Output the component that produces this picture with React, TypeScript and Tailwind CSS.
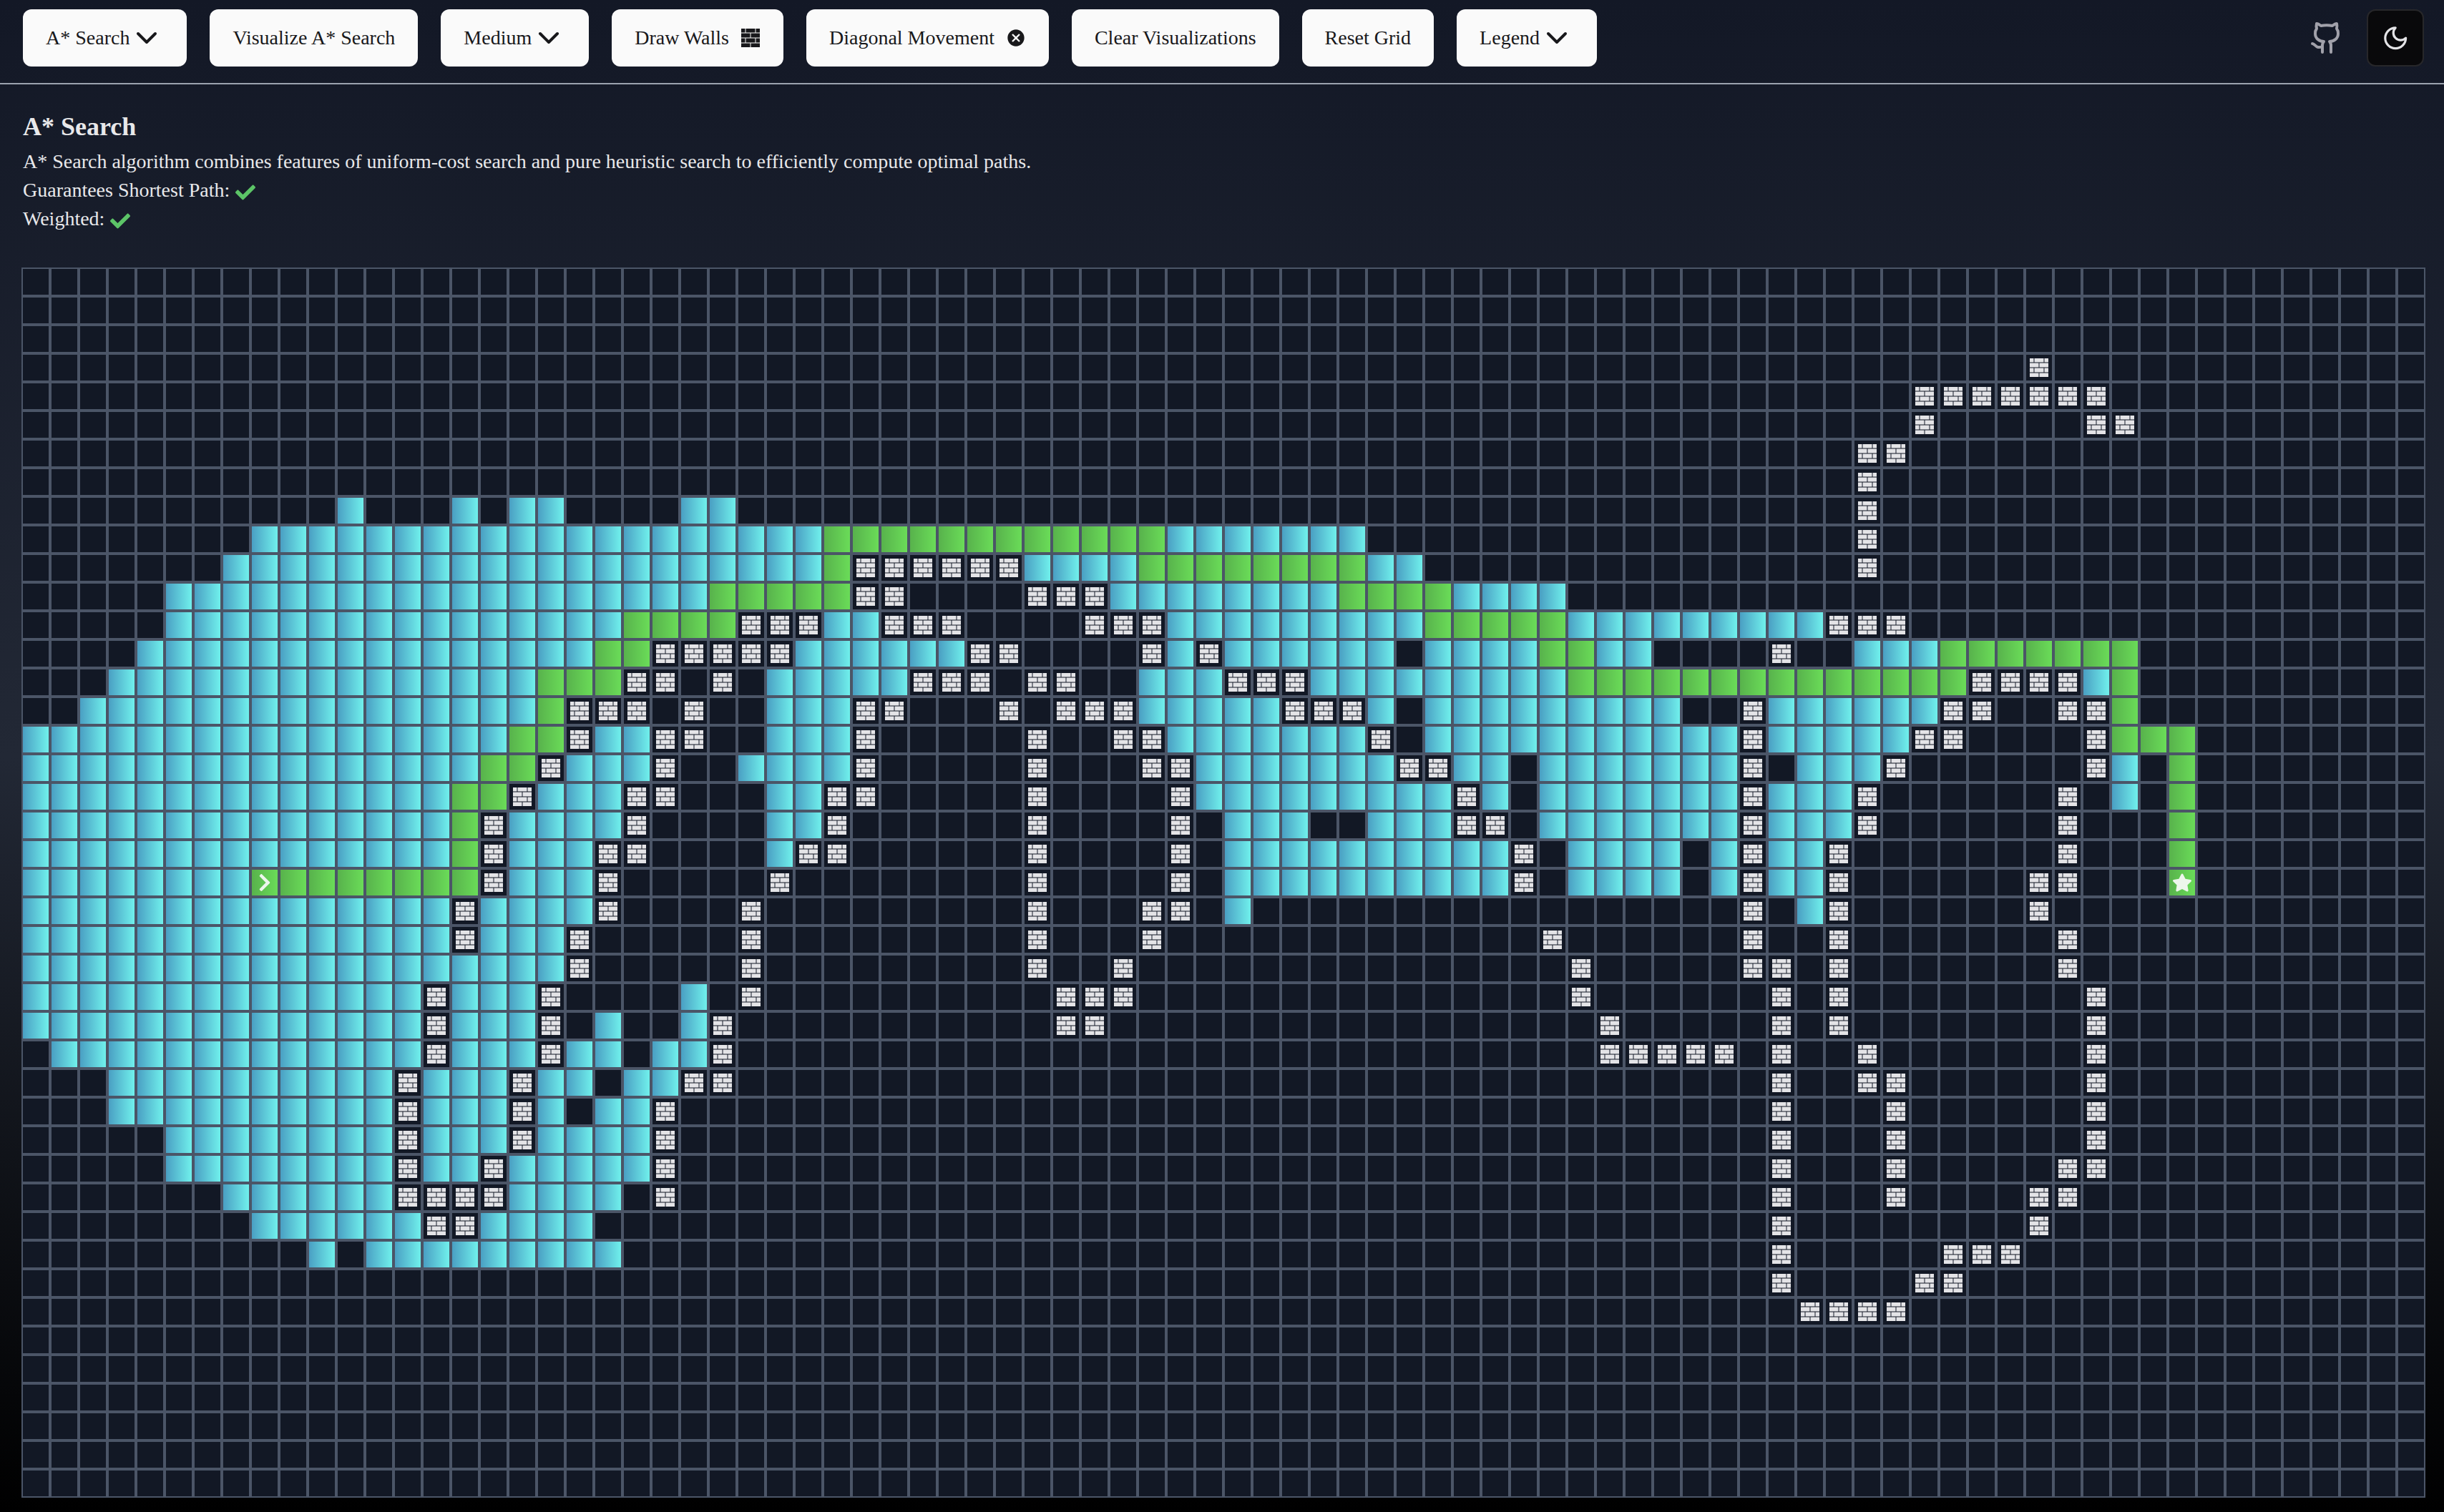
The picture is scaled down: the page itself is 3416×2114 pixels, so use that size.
import React from "react";
import { ChevronDown, Github } from "lucide-react";
import { FaCheck, FaChevronRight, FaStar } from "react-icons/fa";
import { MdCancel } from "react-icons/md";
import { GiBrickWall } from "react-icons/gi";

const ROWS = 43;
const COLS = 84;

type Kind = "v" | "p" | "w" | "s" | "e";

// v = visited, p = path, w = wall, s = start, e = end; each run is "kind from-to".
const RUNS: Record<number, string> = {
  3: "w70",
  4: "w66-72",
  5: "w66 w72-73",
  6: "w64-65",
  7: "w64",
  8: "v11 v15 v17-18 v23-24 w64",
  9: "v8-27 p28-39 v40-46 w64",
  10: "v7-27 p28 w29-34 v35-38 p39-46 v47-48 w64",
  11: "v5-23 p24-28 w29-30 w35-37 v38-45 p46-49 v50-53",
  12: "v5-20 p21-24 w25-27 v28-29 w30-32 w37-39 v40-48 p49-53 v54-62 w63-65",
  13: "v4-19 p20-21 w22-26 v27-32 w33-34 w39 v40 w41 v42-47 v49-52 p53-54 v55-56 w61 v64-66 p67-73",
  14: "v3-17 p18-20 w21-22 w24 v26-30 w31-33 w35-36 v39-41 w42-44 v45-53 p54-67 w68-71 v72 p73",
  15: "v2-17 p18 w19-21 w23 v26-28 w29-30 w34 w36-38 v39-43 w44-46 v47 v49-57 w60 v61-66 w67-68 w71-72 p73",
  16: "v0-16 p17-18 w19 v20-21 w22-23 v26-28 w29 w35 w38-39 v40-46 w47 v49-59 w60 v61-65 w66-67 w72 p73-75",
  17: "v0-15 p16-17 w18 v19-21 w22 v25-28 w29 w35 w39-40 v41-47 w48-49 v50-51 v53-59 w60 v62-64 w65 w72 v73 p75",
  18: "v0-14 p15-16 w17 v18-20 w21-22 v26-27 w28-29 w35 w40 v41-49 w50 v51 v53-59 w60 v61-63 w64 w71 v73 p75",
  19: "v0-14 p15 w16 v17-20 w21 v26-27 w28 w35 w40 v42-44 v47-49 w50-51 v53-59 w60 v61-63 w64 w71 p75",
  20: "v0-14 p15 w16 v17-19 w20-21 v26 w27-28 w35 w40 v42-51 w52 v54-57 v59 w60 v61-62 w63 w71 p75",
  21: "v0-7 s8 p9-15 w16 v17-19 w20 w26 w35 w40 v42-51 w52 v54-57 v59 w60 v61-62 w63 w70-71 e75",
  22: "v0-14 w15 v16-19 w20 w25 w35 w39-40 v42 w60 v62 w63 w70",
  23: "v0-14 w15 v16-18 w19 w25 w35 w39 w53 w60 w63 w71",
  24: "v0-18 w19 w25 w35 w38 w54 w60-61 w63 w71",
  25: "v0-13 w14 v15-17 w18 v23 w25 w36-38 w54 w61 w63 w72",
  26: "v0-13 w14 v15-17 w18 v20 v23 w24 w36-37 w55 w61 w63 w72",
  27: "v1-13 w14 v15-17 w18 v19-20 v22-23 w24 w55-59 w61 w64 w72",
  28: "v3-12 w13 v14-16 w17 v18-19 v21-22 w23-24 w61 w64-65 w72",
  29: "v3-12 w13 v14-16 w17 v18 v20-21 w22 w61 w65 w72",
  30: "v5-12 w13 v14-16 w17 v18-21 w22 w61 w65 w72",
  31: "v5-12 w13 v14-15 w16 v17-21 w22 w61 w65 w71-72",
  32: "v7-12 w13-16 v17-20 w22 w61 w65 w70-71",
  33: "v8-13 w14-15 v16-19 w61 w70",
  34: "v10 v12-20 w61 w67-69",
  35: "w61 w66-67",
  36: "w62-65",
};

function parseRow(row: number): (Kind | null)[] {
  const cells: (Kind | null)[] = Array(COLS).fill(null);
  for (const run of (RUNS[row] ?? "").split(" ").filter(Boolean)) {
    const [from, to = from] = run.slice(1).split("-").map(Number);
    cells.fill(run[0] as Kind, from, to + 1);
  }
  return cells;
}

const GRID = Array.from({ length: ROWS }, (_, r) => parseRow(r));

const BASE =
  "flex h-10 w-10 shrink-0 items-center justify-center border-2 border-[#4b5567] bg-clip-padding text-[28px] text-[#e4e4e7]";
const VISITED = "bg-linear-to-r/srgb from-[#4a9fc3] to-[#70f0ec]";
const PATH = "bg-linear-to-r/srgb from-[#58b24c] to-[#6adc58]";

function Cell({ kind }: { kind: Kind | null }) {
  if (kind === "v") return <div className={`${BASE} ${VISITED}`} />;
  if (kind === "p") return <div className={`${BASE} ${PATH}`} />;
  if (kind === "s")
    return (
      <div className={`${BASE} ${PATH}`}>
        <FaChevronRight className="shrink-0 text-[#edf6ec]" />
      </div>
    );
  if (kind === "e")
    return (
      <div className={`${BASE} ${PATH}`}>
        <FaStar className="shrink-0 text-[#edf6ec]" />
      </div>
    );
  return (
    <div className={`${BASE} bg-[#121825]`}>
      {kind === "w" && <GiBrickWall className="shrink-0" />}
    </div>
  );
}

function Button({ children }: { children: React.ReactNode }) {
  return (
    <button className="flex h-20 items-center rounded-xl bg-[#fafafa] px-8 text-[28px] leading-10 whitespace-nowrap text-[#18181b]">
      {children}
    </button>
  );
}

function Header() {
  return (
    <header className="flex h-[118px] items-start justify-between border-b-2 border-[#9ca3af] pt-[13px] pr-7 pl-8">
      <div className="flex gap-8">
        <Button>
          A* Search
          <ChevronDown size={48} />
        </Button>
        <Button>Visualize A* Search</Button>
        <Button>
          Medium
          <ChevronDown size={48} />
        </Button>
        <Button>
          Draw Walls
          <GiBrickWall className="ml-4" />
        </Button>
        <Button>
          Diagonal Movement
          <MdCancel className="ml-4" />
        </Button>
        <Button>Clear Visualizations</Button>
        <Button>Reset Grid</Button>
        <Button>
          Legend
          <ChevronDown size={48} />
        </Button>
      </div>
      <div className="flex items-center gap-8">
        <Github size={48} className="text-[#a1a1aa]" />
        <button className="flex h-20 w-20 items-center justify-center rounded-xl border-2 border-[#27272a] bg-[#09090b] text-[#e4e4e7]">
          <svg
            className="h-[38.4px] w-[38.4px]"
            viewBox="0 0 24 24"
            fill="none"
            stroke="currentColor"
            strokeWidth="2"
            strokeLinecap="round"
            strokeLinejoin="round"
          >
            <path d="M12 3a6 6 0 0 0 9 9 9 9 0 1 1-9-9Z" />
          </svg>
        </button>
      </div>
    </header>
  );
}

function Description() {
  return (
    <section className="flex h-64 flex-col px-8 pt-8 text-[28px] leading-10 text-[#e8e8ea]">
      <h1 className="mb-0.5 text-[36px] leading-[54px] font-bold">A* Search</h1>
      <p>
        A* Search algorithm combines features of uniform-cost search and pure heuristic search to
        efficiently compute optimal paths.
      </p>
      <p className="flex items-center gap-2">
        Guarantees Shortest Path: <FaCheck className="mt-[5px] text-[#5cc467]" />
      </p>
      <p className="flex items-center gap-2">
        Weighted: <FaCheck className="mt-[5px] text-[#5cc467]" />
      </p>
    </section>
  );
}

export default function App() {
  return (
    <div className="h-[2114px] w-[3416px] overflow-hidden bg-linear-to-b/srgb from-[#131826] via-[#222835] to-black font-['Liberation_Serif',serif] antialiased">
      <Header />
      <Description />
      <main className="ml-[30px] flex flex-col">
        {GRID.map((cells, r) => (
          <div key={r} className="flex">
            {cells.map((kind, c) => (
              <Cell key={c} kind={kind} />
            ))}
          </div>
        ))}
      </main>
    </div>
  );
}
